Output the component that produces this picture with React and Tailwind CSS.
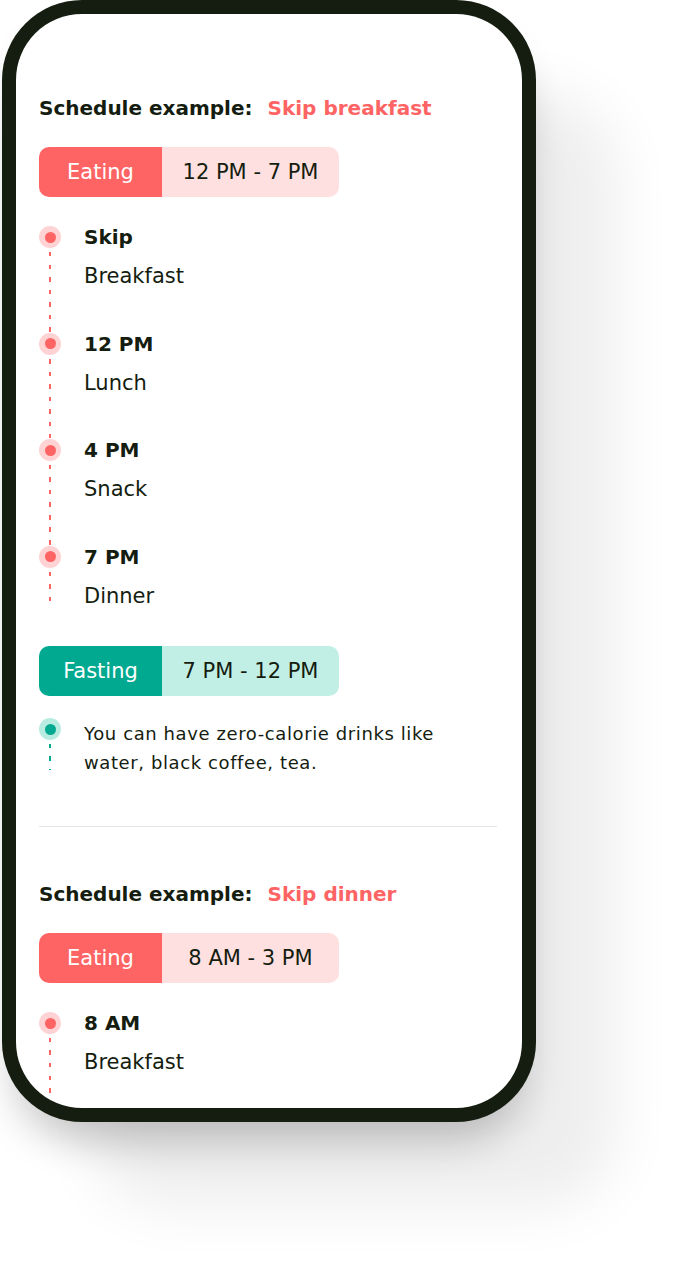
import React from 'react';

const font = { fontFamily: '"DejaVu Sans", "Noto Sans", sans-serif' };

const redDash =
  'bg-[repeating-linear-gradient(to_bottom,transparent_0px,transparent_4px,#ff6464_4px,#ff6464_8.5px,transparent_8.5px,transparent_12.5px)]';
const tealDash =
  'bg-[repeating-linear-gradient(to_bottom,transparent_0px,transparent_4px,#00a98f_4px,#00a98f_8.5px,transparent_8.5px,transparent_12.5px)]';

function Dot({ teal }) {
  return (
    <div
      className={`flex h-[22px] w-[22px] shrink-0 items-center justify-center rounded-full ${
        teal ? 'bg-[#b8ece1]' : 'bg-[#ffd2d4]'
      }`}
    >
      <div className={`h-[11px] w-[11px] rounded-full ${teal ? 'bg-[#00a98f]' : 'bg-[#ff6464]'}`} />
    </div>
  );
}

function Pill({ label, range, teal }) {
  return (
    <div className="flex h-[50px] w-[300px] overflow-hidden rounded-[10px] text-[21px]">
      <div
        className={`flex w-[123px] items-center justify-center pt-[2px] text-white ${
          teal ? 'bg-[#00a98f]' : 'bg-[#ff6464]'
        }`}
      >
        {label}
      </div>
      <div
        className={`flex flex-1 items-center justify-center pt-[2px] text-[#141d0f] ${
          teal ? 'bg-[#c2efe5]' : 'bg-[#ffe0e0]'
        }`}
      >
        {range}
      </div>
    </div>
  );
}

function Stop({ time, meal, last }) {
  return (
    <div className="flex">
      <div className="flex w-[22px] flex-col items-center pt-[1px]">
        <Dot />
        <div className={`w-[1.5px] flex-1 ${redDash}`} />
      </div>
      <div className={`ml-[23px] ${last ? 'pb-0' : 'pb-[43.5px]'}`}>
        <div className="h-[24px] text-[20px] font-bold leading-[24px]">{time}</div>
        <div className="mt-[15px] h-[24px] text-[21px] leading-[24px]">{meal}</div>
      </div>
    </div>
  );
}

function Title({ children }) {
  return (
    <div className="flex h-[24px] items-center text-[20px] font-bold leading-[24px]">
      <span>Schedule example:</span>
      <span className="ml-[15px] text-[#ff6464]">{children}</span>
    </div>
  );
}

export default function App() {
  return (
    <div className="h-[1270px] w-[698px] overflow-hidden bg-white" style={font}>
      <div className="ml-[2px] h-[1122px] w-[534px] rounded-[80px] bg-[#151d10] p-[14px] shadow-[0_30px_40px_-12px_rgba(0,0,0,0.22),85px_90px_60px_-5px_rgba(0,0,0,0.07)]">
        <div className="h-full overflow-hidden rounded-[66px] bg-white pl-[23px] pr-[25px] pt-[82px] text-[#141d0f]">
          <Title>Skip breakfast</Title>

          <div className="mt-[27px]">
            <Pill label="Eating" range="12 PM - 7 PM" />
          </div>

          <div className="mt-[28px]">
            <Stop time="Skip" meal="Breakfast" />
            <Stop time="12 PM" meal="Lunch" />
            <Stop time="4 PM" meal="Snack" />
            <Stop time="7 PM" meal="Dinner" last />
          </div>

          <div className="mt-[38.5px]">
            <Pill label="Fasting" range="7 PM - 12 PM" teal />
          </div>

          <div className="mt-[22px] flex">
            <div className="flex w-[22px] flex-col items-center">
              <Dot teal />
              <div className={`h-[30px] w-[1.5px] ${tealDash}`} />
            </div>
            <p className="ml-[23px] mt-[2px] text-[18px] leading-[28.5px] tracking-[0.6px]">
              You can have zero-calorie drinks like
              <br />
              water, black coffee, tea.
            </p>
          </div>

          <div className="mt-[49px] h-px bg-[#e6e6e6]" />

          <div className="mt-[55px]">
            <Title>Skip dinner</Title>
          </div>

          <div className="mt-[27px]">
            <Pill label="Eating" range="8 AM - 3 PM" />
          </div>

          <div className="mt-[28px]">
            <Stop time="8 AM" meal="Breakfast" />
          </div>
        </div>
      </div>
    </div>
  );
}
